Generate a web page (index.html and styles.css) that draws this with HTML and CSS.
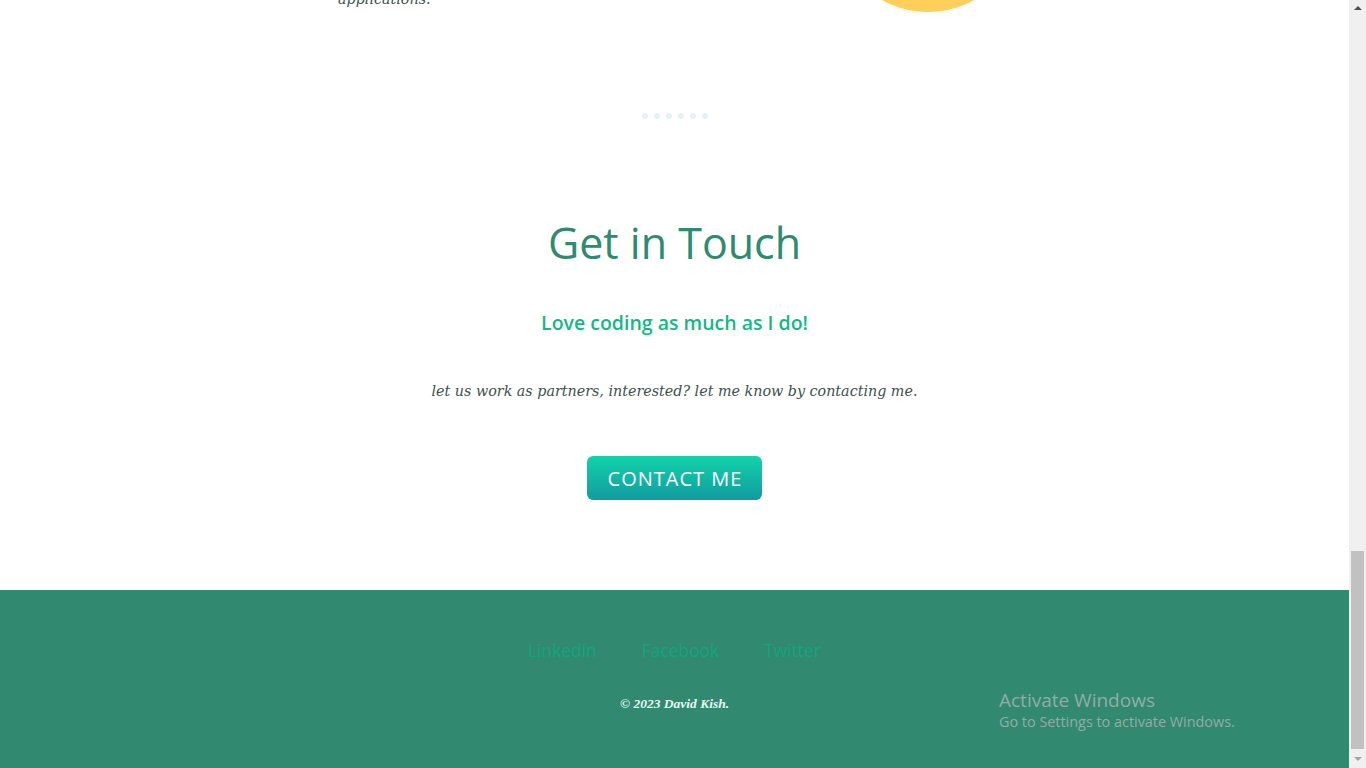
FILE: index.html
```html
<!DOCTYPE html>
<html lang="en">
<head>
<meta charset="utf-8">
<title>David Kish</title>
<link rel="stylesheet" href="styles.css">
</head>
<body>
<div class="page">
  <section class="intro">
    <p class="intro-text">applications.</p>
    <div class="sun"></div>
  </section>

  <div class="dots">
    <span></span><span></span><span></span><span></span><span></span><span></span>
  </div>

  <section class="contact">
    <h2 class="contact-title">Get in Touch</h2>
    <h3 class="contact-sub">Love coding as much as I do!</h3>
    <p class="contact-text">let us work as partners, interested? let me know by contacting me.</p>
    <a class="btn" href="#">CONTACT ME</a>
  </section>

  <footer class="footer">
    <nav class="footer-links">
      <a href="#">Linkedin</a>
      <a href="#">Facebook</a>
      <a href="#">Twitter</a>
    </nav>
    <p class="copy">© 2023 David Kish.</p>
    <div class="activate">
      <div class="activate-title">Activate Windows</div>
      <div class="activate-sub">Go to Settings to activate Windows.</div>
    </div>
  </footer>
</div>
<div class="scrollbar">
  <div class="sb-up"></div>
  <div class="sb-track"><div class="sb-thumb"></div></div>
  <div class="sb-down"></div>
</div>
</body>
</html>
```

FILE: styles.css
```css
* { box-sizing: border-box; }
html, body { margin: 0; padding: 0; height: 100%; overflow: hidden; background: #fff; }
body { font-family: "DejaVu Serif", serif; }

.page {
  width: 1349px;
  height: 768px;
  display: flex;
  flex-direction: column;
}

.intro {
  display: flex;
  align-items: flex-end;
  height: 190px;
  margin-top: -178px;
  flex-shrink: 0;
}
.intro-text {
  margin: 0 0 3px 338px;
  width: 495px;
  font-family: "DejaVu Serif", serif;
  font-style: italic;
  font-size: 14.3px;
  line-height: 20px;
  color: #40514e;
}
.sun {
  width: 190px;
  height: 190px;
  border-radius: 50%;
  background: #fecf5a;
}

.dots {
  display: flex;
  justify-content: center;
  gap: 6px;
  margin-top: 101px;
  padding-left: 1px;
}
.dots span {
  width: 6px;
  height: 6px;
  border-radius: 50%;
  background: #e1f3f4;
}

.contact {
  display: flex;
  flex-direction: column;
  align-items: center;
  flex: 1;
}
.contact-title {
  margin: 100px 0 0;
  font-family: "Open Sans", sans-serif;
  font-weight: 400;
  font-size: 43px;
  line-height: 48px;
  color: #2f8a72;
}
.contact-sub {
  margin: 42px 0 0;
  font-family: "Open Sans", sans-serif;
  font-weight: 600;
  font-size: 19.5px;
  line-height: 28px;
  color: #14b886;
}
.contact-text {
  margin: 42px 0 0;
  font-family: "DejaVu Serif", serif;
  font-style: italic;
  font-size: 14.3px;
  line-height: 24px;
  color: #40514e;
}
.btn {
  margin-top: 53px;
  width: 175px;
  height: 44px;
  display: flex;
  align-items: center;
  justify-content: center;
  border-radius: 6px;
  background: linear-gradient(#11d3a9, #129ba0);
  color: #fff;
  text-decoration: none;
  font-family: "Open Sans", sans-serif;
  font-size: 20px;
  letter-spacing: 1px;
  padding-left: 1px;
}

.footer {
  height: 178px;
  flex-shrink: 0;
  background: #318970;
  position: relative;
  display: flex;
  flex-direction: column;
  align-items: center;
}
.footer-links {
  display: flex;
  gap: 45px;
  margin-top: 49px;
}
.footer-links a {
  font-family: "Open Sans", sans-serif;
  font-size: 17.4px;
  line-height: 22px;
  color: #12a57c;
  text-decoration: none;
}
.copy {
  margin: 34px 0 0;
  font-family: "Liberation Serif", serif;
  font-style: italic;
  font-weight: 700;
  font-size: 13.5px;
  line-height: 18px;
  color: #eaf6f6;
}

.activate {
  position: absolute;
  left: 999px;
  top: 98px;
  font-family: "Open Sans", sans-serif;
  color: #93ada5;
}
.activate-title { font-size: 19px; line-height: 24px; }
.activate-sub { font-size: 14.4px; line-height: 20px; }

.scrollbar {
  position: fixed;
  right: 0;
  top: 0;
  width: 17px;
  height: 768px;
  background: #f0f0f0;
  display: flex;
  flex-direction: column;
}
.sb-up, .sb-down { height: 17px; position: relative; }
.sb-up::after {
  content: "";
  position: absolute;
  left: 5px; top: 6px;
  border-left: 4px solid transparent;
  border-right: 4px solid transparent;
  border-bottom: 4px solid #505050;
}
.sb-down::after {
  content: "";
  position: absolute;
  left: 5px; top: 6px;
  border-left: 4px solid transparent;
  border-right: 4px solid transparent;
  border-top: 4px solid #a3a3a3;
}
.sb-track { flex: 1; position: relative; }
.sb-thumb {
  position: absolute;
  left: 2px; right: 2px;
  top: 534px;
  bottom: 2px;
  background: #c1c1c1;
}
```
